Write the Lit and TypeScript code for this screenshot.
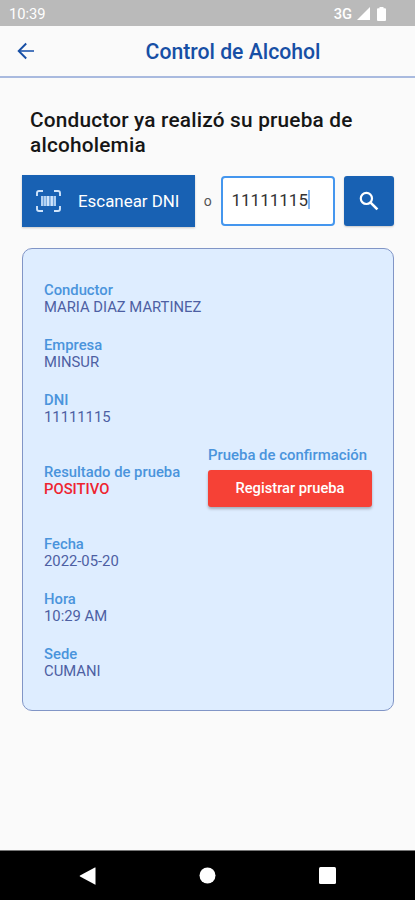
import { LitElement, html, css } from "lit";
import { customElement, property } from "lit/decorators.js";

@customElement("data-field")
class DataField extends LitElement {
  @property() label = "";
  @property() value = "";
  @property({ type: Boolean }) alert = false;

  static styles = css`
    :host { display: block; font-size: 14.8px; line-height: 17px; white-space: nowrap; }
    .label { color: #4a94dc; font-weight: 500; }
    .value { color: #4d5fa3; }
    .alert { color: #ee2430; font-weight: 500; }
  `;

  render() {
    return html`
      <div class="label">${this.label}</div>
      <div class=${this.alert ? "alert" : "value"}>${this.value}</div>
    `;
  }
}

@customElement("app-root")
class AppRoot extends LitElement {
  static styles = css`
    :host {
      display: flex; flex-direction: column; box-sizing: border-box;
      width: 415px; height: 900px; overflow: hidden;
      background: #fafafa; font-family: Roboto, "Liberation Sans", sans-serif; color: #161616;
    }
    svg { display: block; flex: none; }
    .status {
      display: flex; align-items: center; justify-content: space-between; box-sizing: border-box;
      height: 25.5px; padding: 2px 29px 0 9px; background: #bababa; color: #fff; font-size: 14.7px;
    }
    .signals { display: flex; align-items: center; }
    .net { margin-right: 5px; font-weight: 500; }
    .signal { margin-right: 7px; }
    .bar {
      display: grid; grid-template-columns: 51px 1fr; align-items: center; box-sizing: border-box;
      height: 52.5px; border-bottom: 2px solid #a9badf; color: #174fa5;
    }
    .bar svg { margin-left: 17px; }
    h1 { margin: 3px 0 0; text-align: center; font-size: 21.2px; line-height: 26px; font-weight: 500; white-space: nowrap; }
    main { flex: 1; padding: 30px 21px 0 22px; }
    h2 { margin: 0; padding-left: 8px; font-size: 20.8px; line-height: 24.5px; letter-spacing: 0.2px; font-weight: 500; }
    .search { display: flex; align-items: center; height: 52px; margin-top: 18px; }
    .scan {
      display: flex; align-items: center; box-sizing: border-box; width: 173px; height: 52px;
      padding-left: 14px; background: #1861b3; color: #fff; font-size: 16.9px; white-space: nowrap;
      box-shadow: 0 1px 2px #0003;
    }
    .scan svg { margin-right: 17px; }
    .or { width: 25.5px; text-align: center; color: #555; font-size: 14px; }
    .entry {
      display: flex; align-items: center; box-sizing: border-box; width: 114px; height: 50.5px; padding: 0 0 3px 9px;
      border: 2px solid #4496ee; border-radius: 4px; background: #fff; color: #333; font-size: 17px;
    }
    .caret { width: 2.5px; height: 19px; background: #7fb4f2; }
    .find {
      display: flex; align-items: center; justify-content: center; width: 50.5px; height: 50px;
      margin-left: 9px; border-radius: 3px; background: #1861b3; box-shadow: 0 1px 2px #0003;
    }
    .card {
      display: flex; flex-direction: column; gap: 21px; box-sizing: border-box; height: 463px;
      margin-top: 21px; padding: 32.5px 21px; border: 1.5px solid #8195c6; border-radius: 10px; background: #deedff;
    }
    .result { display: flex; align-items: center; justify-content: space-between; height: 70px; }
    .confirm { width: 164px; margin-bottom: 8px; color: #4a94dc; font-size: 14.9px; line-height: 17px; font-weight: 500; white-space: nowrap; }
    .register {
      display: flex; align-items: center; justify-content: center; box-sizing: border-box; height: 37.5px; margin-top: 6px; padding-top: 1px;
      border-radius: 3px; background: #f64136; color: #fff; font-size: 14.7px; box-shadow: 0 2px 3px #0004;
    }
    .nav {
      display: flex; align-items: center; justify-content: space-between; box-sizing: border-box;
      height: 50px; padding: 0 79px; border-top: 1px solid #777; background: #000;
    }
  `;

  render() {
    return html`
      <div class="status">
        <span>10:39</span>
        <div class="signals">
          <span class="net">3G</span>
          <svg class="signal" width="13" height="13"><path d="M13 0V13H0Z" fill="#fff" /></svg>
          <svg width="9" height="14"><path d="M2.5 1.2V0h4v1.2H8q1 0 1 1V13q0 1-1 1H1q-1 0-1-1V2.2q0-1 1-1Z" fill="#fff" /></svg>
        </div>
      </div>
      <div class="bar">
        <svg width="18" height="18" fill="none" stroke="currentColor" stroke-width="1.9"><path d="M17 9H2" stroke="#4c78bd" stroke-width="2" /><path d="M9.2 1.5 1.7 9l7.5 7.5" /></svg>
        <h1>Control de Alcohol</h1>
      </div>
      <main>
        <h2>Conductor ya realizó su prueba de alcoholemia</h2>
        <div class="search">
          <div class="scan">
            <svg width="25" height="22" fill="none" stroke="#cfe4fb" stroke-width="1.9">
              <path d="M1 6V3q0-2 2-2h4M18 1h4q2 0 2 2v3M24 16v3q0 2-2 2h-4M7 21H3q-2 0-2-2v-3" />
              <path d="M5 6h15v10H5Z" fill="#6fa3dc" stroke="none" />
              <path d="M6 6v10M9 6v10M19 6v10" stroke-width="1.4" />
              <path d="M12 6v10M15.8 6v10" stroke-width="2.2" />
            </svg>
            <span>Escanear DNI</span>
          </div>
          <span class="or">o</span>
          <div class="entry"><span>11111115</span><span class="caret"></span></div>
          <div class="find">
            <svg width="20" height="20" fill="none" stroke="#fff" stroke-width="2.2"><circle cx="7.4" cy="7.4" r="5.6" /><path d="m11.6 11.6 6.8 6.8" stroke-width="2.6" /></svg>
          </div>
        </div>
        <div class="card">
          <data-field label="Conductor" value="MARIA DIAZ MARTINEZ"></data-field>
          <data-field label="Empresa" value="MINSUR"></data-field>
          <data-field label="DNI" value="11111115"></data-field>
          <div class="result">
            <data-field label="Resultado de prueba" value="POSITIVO" alert></data-field>
            <div class="confirm">Prueba de confirmación<div class="register">Registrar prueba</div></div>
          </div>
          <data-field label="Fecha" value="2022-05-20"></data-field>
          <data-field label="Hora" value="10:29 AM"></data-field>
          <data-field label="Sede" value="CUMANI"></data-field>
        </div>
      </main>
      <div class="nav">
        <svg width="17" height="18" fill="#fff"><path d="M16.5 .8v16.6q0 .5-.6.2L1 9.6q-.7-.5 0-1L15.9.6q.6-.3.6.2Z" /></svg>
        <svg width="17" height="17" fill="#fff"><circle cx="8.5" cy="8.5" r="8" /></svg>
        <svg width="17" height="17" fill="#fff"><rect width="17" height="17" rx="1.5" /></svg>
      </div>
    `;
  }
}
